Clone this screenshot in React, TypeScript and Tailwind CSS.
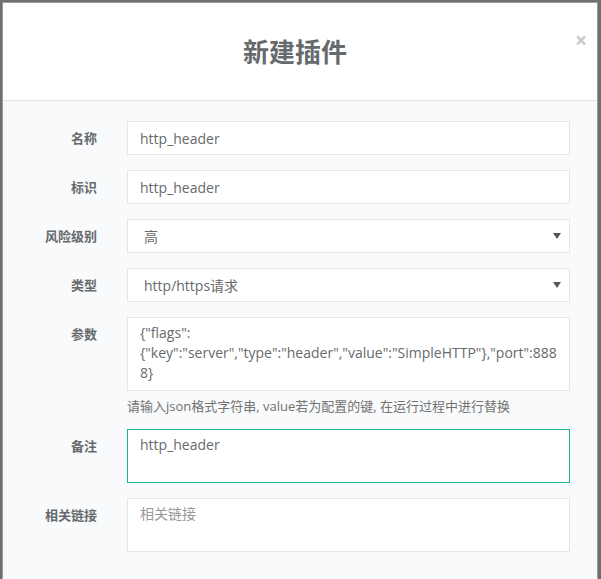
import React from "react";

const font = { fontFamily: '"Open Sans", "Noto Sans CJK SC", sans-serif' };

function Label({ children }: { children: React.ReactNode }) {
  return (
    <div className="w-[94px] shrink-0 pt-[7px] text-right text-[13px] leading-[20px] font-bold text-[#676a6c]">
      {children}
    </div>
  );
}

function Input({ value }: { value: string }) {
  return (
    <div className="ml-[30px] flex h-[34px] w-[443px] items-center border border-[#e5e6e7] bg-white px-[12px] text-[14px] text-[#676a6c]">
      {value}
    </div>
  );
}

function Select({ value }: { value: string }) {
  return (
    <div className="ml-[30px] flex h-[34px] w-[443px] items-center justify-between border border-[#e5e6e7] bg-white pl-[16px] pr-[8px] text-[14px] text-[#676a6c]">
      <span>{value}</span>
      <svg width="8" height="6" viewBox="0 0 8 6">
        <path d="M0 0 H8 L4 6 Z" fill="#555" />
      </svg>
    </div>
  );
}

export default function App() {
  return (
    <div className="h-[579px] w-[601px] overflow-hidden bg-[#6f6f6f]" style={font}>
      <div className="ml-[2px] mt-[2px] h-[600px] w-[596px] border border-[#9a9a9a] bg-white">
        <div className="relative flex h-[98px] items-center justify-center border-b border-[#e5e5e5] bg-white pr-[10px]">
          <h4 className="text-[26px] font-bold leading-none text-[#676a6c]">新建插件</h4>
          <span className="absolute right-[10px] top-[27px] text-[21px] font-bold leading-none text-[#c8c8c8]">×</span>
        </div>
        <div className="bg-[#f8fafb] pt-[20px] pb-[40px]">
          <div className="mb-[15px] flex">
            <Label>名称</Label>
            <Input value="http_header" />
          </div>
          <div className="mb-[15px] flex">
            <Label>标识</Label>
            <Input value="http_header" />
          </div>
          <div className="mb-[15px] flex">
            <Label>风险级别</Label>
            <Select value="高" />
          </div>
          <div className="mb-[15px] flex">
            <Label>类型</Label>
            <Select value="http/https请求" />
          </div>
          <div className="flex">
            <Label>参数</Label>
            <div className="ml-[30px] w-[443px]">
              <div className="h-[74px] border border-[#e5e6e7] bg-white px-[12px] py-[5px] text-[14px] leading-[20px] text-[#676a6c] whitespace-pre">
                {'{"flags":\n{"key":"server","type":"header","value":"SimpleHTTP"},"port":888\n8}'}
              </div>
              <div className="mt-[5px] mb-[13px] h-[20px] text-[13px] leading-[20px] text-[#737373]">
                请输入json格式字符串, value若为配置的键, 在运行过程中进行替换
              </div>
            </div>
          </div>
          <div className="mb-[15px] flex">
            <Label>备注</Label>
            <div className="ml-[30px] h-[54px] w-[443px] border border-[#1ab394] bg-white px-[12px] py-[5px] text-[14px] leading-[20px] text-[#676a6c]">
              http_header
            </div>
          </div>
          <div className="mb-[15px] flex">
            <Label>相关链接</Label>
            <div className="ml-[30px] h-[54px] w-[443px] border border-[#e5e6e7] bg-white px-[12px] py-[5px] text-[14px] leading-[20px] text-[#999]">
              相关链接
            </div>
          </div>
        </div>
      </div>
    </div>
  );
}
